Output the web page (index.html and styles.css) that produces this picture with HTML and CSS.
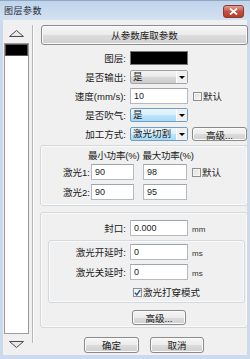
FILE: index.html
```html
<!DOCTYPE html>
<html lang="zh">
<head>
    <meta charset="UTF-8" />
    <meta name="viewport" content="width=device-width, initial-scale=1.0" />
    <title>图层参数</title>
    <link rel="stylesheet" href="styles.css">
</head>
<body>
    <div class="window">
        <div class="titlebar">
            <span class="title">图层参数</span>
            <span class="close-btn">
                <svg width="9" height="7" viewBox="0 0 9 7"><path d="M1 0.5 L8 6.5 M8 0.5 L1 6.5" stroke="#fff" stroke-width="1.8"/></svg>
            </span>
        </div>

        <div class="client">
            <div class="side">
                <svg class="arrow-up" width="15" height="7" viewBox="0 0 15 7"><path d="M0.5 6.5 L7.5 0.5 L14.5 6.5 Z" fill="#e8e8e8" stroke="#4a4a4a"/></svg>
                <div class="layer-list">
                    <div class="layer-item"></div>
                </div>
                <svg class="arrow-down" width="15" height="7" viewBox="0 0 15 7"><path d="M0.5 0.5 L7.5 6.5 L14.5 0.5 Z" fill="#e8e8e8" stroke="#4a4a4a"/></svg>
            </div>

            <div class="divider"></div>

            <div class="main">
                <button class="btn wide-btn">从参数库取参数</button>

                <div class="row first-row">
                    <span class="label">图层:</span>
                    <span class="swatch"></span>
                </div>
                <div class="row">
                    <span class="label">是否输出:</span>
                    <span class="select">
                        <span class="select-value">是</span>
                        <span class="select-drop"></span>
                    </span>
                </div>
                <div class="row">
                    <span class="label">速度(mm/s):</span>
                    <span class="text-input">10</span>
                    <span class="check"><span class="check-box"></span>默认</span>
                </div>
                <div class="row">
                    <span class="label">是否吹气:</span>
                    <span class="select select-hot">
                        <span class="select-value">是</span>
                        <span class="select-drop"></span>
                    </span>
                </div>
                <div class="row">
                    <span class="label">加工方式:</span>
                    <span class="select select-hot">
                        <span class="select-value">激光切割</span>
                        <span class="select-drop"></span>
                    </span>
                    <button class="btn adv-btn">高级...</button>
                </div>

                <div class="group power-group">
                    <div class="power-head">
                        <span class="head-cell">最小功率(%)</span>
                        <span class="head-cell">最大功率(%)</span>
                    </div>
                    <div class="power-row">
                        <span class="power-label">激光1:</span>
                        <span class="text-input">90</span>
                        <span class="text-input">98</span>
                        <span class="check"><span class="check-box"></span>默认</span>
                    </div>
                    <div class="power-row">
                        <span class="power-label">激光2:</span>
                        <span class="text-input">90</span>
                        <span class="text-input">95</span>
                    </div>
                </div>

                <div class="group seal-group">
                    <div class="row seal-row">
                        <span class="label">封口:</span>
                        <span class="text-input">0.000</span>
                        <span class="unit">mm</span>
                    </div>

                    <div class="group delay-group">
                        <div class="row delay-row">
                            <span class="label">激光开延时:</span>
                            <span class="text-input">0</span>
                            <span class="unit">ms</span>
                        </div>
                        <div class="row delay-row">
                            <span class="label">激光关延时:</span>
                            <span class="text-input">0</span>
                            <span class="unit">ms</span>
                        </div>
                        <div class="row delay-row">
                            <span class="check pierce-check">
                                <span class="check-box checked">
                                    <svg width="7" height="7" viewBox="0 0 7 7"><path d="M0.8 3.6 L2.8 5.8 L6.3 0.8" fill="none" stroke="#2a4fa0" stroke-width="1.4"/></svg>
                                </span>激光打穿模式
                            </span>
                        </div>
                    </div>

                    <button class="btn seal-adv-btn">高级...</button>
                </div>

                <div class="actions">
                    <button class="btn ok-btn">确定</button>
                    <button class="btn cancel-btn">取消</button>
                </div>
            </div>
        </div>
    </div>
</body>
</html>
```

FILE: styles.css
```css
* {
    box-sizing: border-box;
}

body {
    margin: 0;
    font-family: 'Liberation Sans', 'Noto Sans CJK SC', sans-serif;
    font-size: 9.5px;
    color: #1a1a1a;
    background: #ffffff;
}

.window {
    width: 250px;
    height: 359px;
    background: #cbdbed;
    padding: 0 3px 4px 3px;
    display: flex;
    flex-direction: column;
}

.titlebar {
    height: 20px;
    margin: 0 -3px;
    padding: 0 6px 0 4px;
    display: flex;
    align-items: center;
    justify-content: space-between;
    background: linear-gradient(#c0d4ea, #d3e1f1);
    border-top: 1px solid #8fa7c2;
}

.title {
    font-size: 9px;
    color: #1e2b3a;
    letter-spacing: 0.5px;
}

.close-btn {
    width: 21px;
    height: 13px;
    margin-top: 1px;
    border: 1px solid #8a3a30;
    border-radius: 3px;
    background: linear-gradient(#e3a096, #c8503f 50%, #b63c2b);
    display: flex;
    align-items: center;
    justify-content: center;
}

.client {
    flex: 1;
    background: #f0f0f0;
    display: flex;
    padding-left: 1px;
}

.side {
    width: 25px;
    display: flex;
    flex-direction: column;
    align-items: center;
}

.arrow-up {
    margin-top: 10px;
}

.layer-list {
    margin-top: 6px;
    width: 25px;
    height: 291px;
    background: #ffffff;
    border: 1px solid #9a9a9a;
}

.layer-item {
    height: 12px;
    background: #000000;
    border: 1px solid #555;
}

.arrow-down {
    margin-top: 7px;
}

.divider {
    width: 2px;
    height: 318px;
    margin: 5px 3px 0 3px;
    border-left: 1px solid #b4b4b4;
    border-right: 1px solid #ffffff;
}

.main {
    width: 209px;
    margin-left: 3px;
    display: flex;
    flex-direction: column;
}

.btn {
    font-family: inherit;
    font-size: 9.5px;
    color: #1a1a1a;
    padding: 0;
    border: 1px solid #8a8a8a;
    border-radius: 3px;
    background: linear-gradient(#f6f6f6, #ebebeb 50%, #dcdcdc 51%, #cfcfcf);
    box-shadow: inset 0 0 0 1px #fbfbfb;
}

.wide-btn {
    margin-top: 5px;
    height: 20px;
    width: 207px;
    margin-left: 1px;
}

.row {
    display: flex;
    align-items: center;
    height: 18px;
    margin-top: 1px;
}

.first-row {
    margin-top: 4px;
}

.label {
    width: 90px;
    padding-right: 4px;
    text-align: right;
    white-space: nowrap;
}

.swatch {
    width: 58px;
    height: 14px;
    background: #000;
    border: 1px solid #777;
}

.select {
    width: 58px;
    height: 14px;
    display: flex;
    border: 1px solid #a3a3a3;
    border-radius: 2px;
    background: linear-gradient(#f4f4f4, #e9e9e9 50%, #d8d8d8 51%, #cdcdcd);
}

.select-hot {
    border-color: #6f9fc4;
    background: linear-gradient(#eaf6fd, #d9effc 50%, #bee6fd 51%, #a7d9f5);
}

.select-value {
    flex: 1;
    padding-left: 2px;
    line-height: 12px;
    white-space: nowrap;
    overflow: hidden;
}

.select-drop {
    width: 11px;
    border-left: 1px solid #ffffff;
    background: #f0f0f0;
    display: flex;
    align-items: center;
    justify-content: center;
}

.select-drop::after {
    content: "";
    border-left: 3px solid transparent;
    border-right: 3px solid transparent;
    border-top: 3px solid #000;
}

.text-input {
    width: 58px;
    height: 16px;
    padding-left: 3px;
    line-height: 14px;
    font-size: 9px;
    background: #ffffff;
    border: 1px solid #b5b9c2;
    border-top-color: #a0a4ad;
}

.check {
    display: flex;
    align-items: center;
    margin-left: 5px;
    white-space: nowrap;
}

.check-box {
    width: 9px;
    height: 9px;
    margin-right: 1px;
    border: 1px solid #8e8f8f;
    background: linear-gradient(135deg, #dcdcdc, #f8f8f8);
    box-shadow: inset 0 0 0 1px #f4f4f4;
    display: flex;
    align-items: center;
    justify-content: center;
}

.check-box.checked {
    background: #f4f4f4;
    box-shadow: none;
}

.adv-btn {
    width: 55px;
    height: 14px;
    margin-left: 4px;
}

.group {
    border: 1px solid #d2dae0;
    border-radius: 3px;
    box-shadow: inset 0 0 0 1px #fafafa;
}

.power-group {
    margin-top: 2px;
    height: 61px;
    padding: 2px 0 4px 0;
}

.power-head {
    display: flex;
    height: 14px;
    align-items: center;
    padding-left: 47px;
}

.head-cell {
    white-space: nowrap;
    letter-spacing: -0.2px;
}

.head-cell + .head-cell {
    margin-left: 3px;
}

.power-row {
    display: flex;
    align-items: center;
    height: 18px;
    margin-top: 1px;
}

.power-row + .power-row {
    margin-top: 2px;
}

.power-label {
    width: 50px;
    text-align: right;
    padding-right: 1px;
    white-space: nowrap;
}

.power-row .text-input {
    width: 43px;
}

.power-row .text-input + .text-input {
    width: 44px;
    margin-left: 9px;
}

.seal-group {
    margin-top: 6px;
    height: 116px;
    padding-top: 6px;
}

.seal-row {
    margin-top: 0;
}

.seal-row .label {
    width: 89px;
}

.unit {
    margin-left: 4px;
    font-size: 8px;
    color: #333;
    padding-top: 3px;
}

.delay-group {
    margin: 3px 2px 0 7px;
    height: 63px;
    padding-top: 2px;
}

.delay-row {
    margin-top: 0;
}

.delay-row + .delay-row {
    margin-top: 2px;
}

.delay-row .label {
    width: 81px;
}

.pierce-check {
    margin-left: 84px;
}

.seal-adv-btn {
    margin-top: 7px;
    margin-left: 91px;
    width: 54px;
    height: 15px;
}

.actions {
    margin-top: 9px;
    display: flex;
    justify-content: center;
    gap: 11px;
}

.ok-btn {
    width: 55px;
    height: 16px;
}

.cancel-btn {
    width: 54px;
    height: 16px;
}
```
